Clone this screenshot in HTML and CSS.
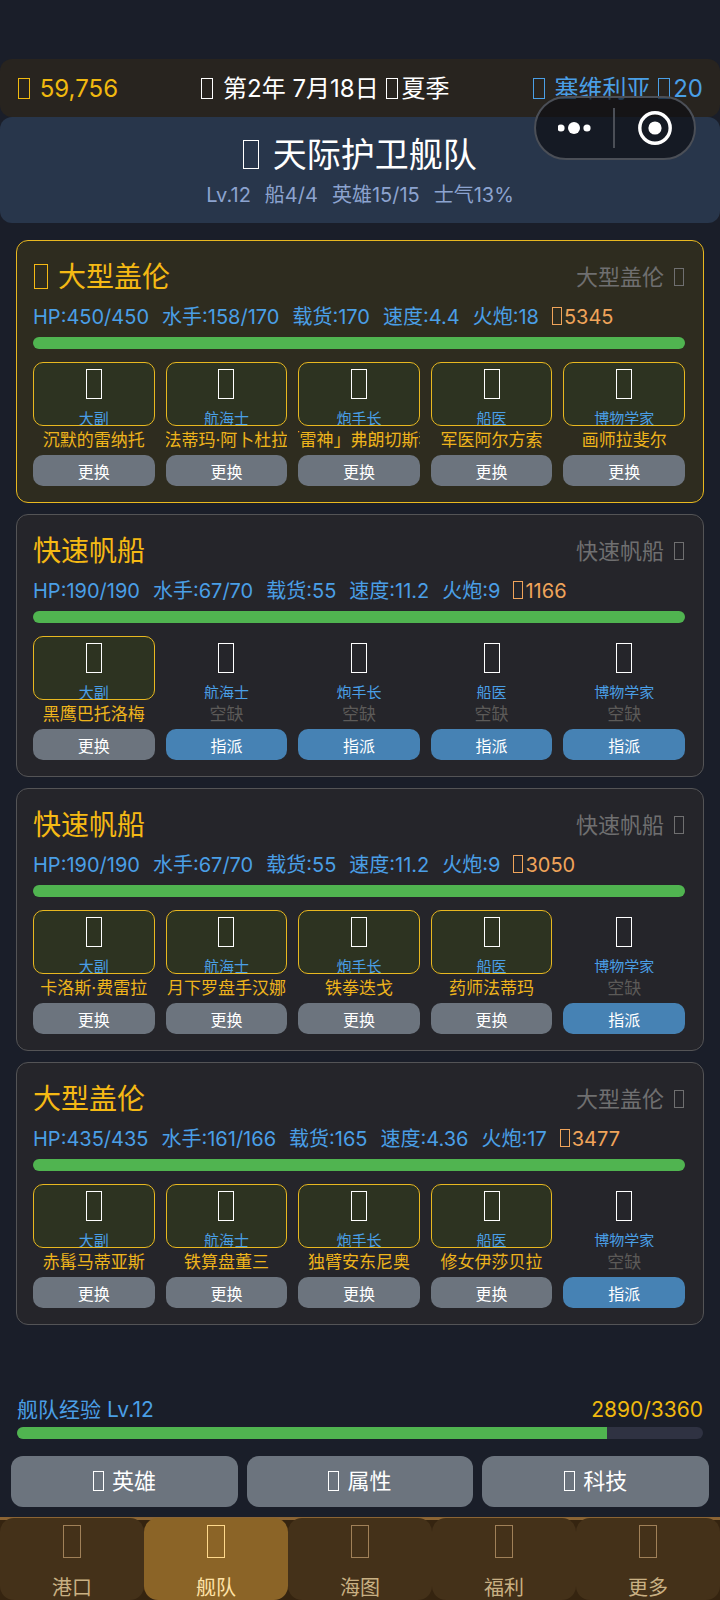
FILE: index.html
```html
<!DOCTYPE html>
<html lang="zh-CN">
<head>
<meta charset="utf-8">
<meta name="viewport" content="width=device-width, initial-scale=1">
<title>天际护卫舰队</title>
<link rel="stylesheet" href="styles.css">
</head>
<body>
<div class="app">
  <div class="topbar">
    <span class="gold"><i class="box box-m"></i> 59,756</span>
    <span class="date"><i class="box box-m"></i> 第2年 7月18日 <i class="box box-m"></i>夏季</span>
    <span class="port"><i class="box box-m"></i> 塞维利亚 <i class="box box-m"></i>20</span>
    <div class="capsule">
      <button class="capsule-btn" type="button" aria-label="更多操作">
        <svg width="36" height="14" viewBox="0 0 36 14" fill="#fff"><circle cx="3" cy="7" r="3.6"/><circle cx="16" cy="7" r="6"/><circle cx="29" cy="7" r="3.6"/></svg>
      </button>
      <button class="capsule-btn" type="button" aria-label="关闭">
        <svg width="34" height="34" viewBox="0 0 34 34"><circle cx="17" cy="17" r="15.2" fill="none" stroke="#fff" stroke-width="3.4"/><circle cx="17" cy="17" r="6.6" fill="#fff"/></svg>
      </button>
    </div>
  </div>
  <header class="fleet">
    <h1 class="fleet-name"><i class="box box-xl"></i> 天际护卫舰队</h1>
    <p class="fleet-info"><span>Lv.12</span><span>船4/4</span><span>英雄15/15</span><span>士气13%</span></p>
  </header>
  <main class="ships" id="ships"></main>
  <section class="exp">
    <div class="exp-row"><span class="exp-label">舰队经验 Lv.12</span><span class="exp-value">2890/3360</span></div>
    <div class="bar"><div class="bar-fill" style="width:86%"></div></div>
  </section>
  <div class="actions">
    <button class="action" type="button"><i class="box box-s"></i> 英雄</button>
    <button class="action" type="button"><i class="box box-s"></i> 属性</button>
    <button class="action" type="button"><i class="box box-s"></i> 科技</button>
  </div>
  <nav class="tabs">
    <button class="tab" type="button"><i class="box box-tab"></i><span>港口</span></button>
    <button class="tab tab-on" type="button" aria-current="page"><i class="box box-tab"></i><span>舰队</span></button>
    <button class="tab" type="button"><i class="box box-tab"></i><span>海图</span></button>
    <button class="tab" type="button"><i class="box box-tab"></i><span>福利</span></button>
    <button class="tab" type="button"><i class="box box-tab"></i><span>更多</span></button>
  </nav>
</div>
<script src="app.js"></script>
</body>
</html>
```
FILE: styles.css
```css
* { box-sizing: border-box; }
body {
  margin: 0;
  background: #1a1e29;
  color: #fff;
  font-family: Inter, "Noto Sans CJK SC", sans-serif;
  font-size: 20px;
}
button {
  margin: 0;
  padding: 0;
  border: 0;
  color: inherit;
  font: inherit;
}
.app {
  display: flex;
  flex-direction: column;
  min-height: 100vh;
  padding-top: 59px;
}

/* placeholder glyph */
.box {
  display: inline-block;
  flex: none;
  border: 1px solid currentColor;
}
.box-xs { width: 10px; height: 18px; margin: 0 1px 0 10px; }
.box-st { width: 10px; height: 18px; margin-right: 2px; vertical-align: -1px; }
.box-s { width: 11px; height: 20px; margin-right: 2px; vertical-align: -2px; }
.box-m { width: 12px; height: 21px; margin: 0 3px 0 1px; vertical-align: -2px; }
.box-l { width: 14px; height: 25px; margin: 0 2px 0 1px; vertical-align: -2px; }
.box-xl { width: 16px; height: 29px; margin-right: 4px; vertical-align: -2px; }
.box-slot { width: 16px; height: 30px; border-color: #fff; }
.box-tab { width: 18px; height: 33px; }

.topbar {
  position: relative;
  display: flex;
  justify-content: space-between;
  align-items: center;
  height: 58px;
  padding: 2px 17px 0;
  border-radius: 12px;
  background: #28241f;
  font-size: 24px;
  line-height: 32px;
  white-space: nowrap;
}
.gold { color: #f0b90f; }
.date { color: #fff; }
.port { color: #4a9fe6; }
.capsule {
  position: absolute;
  top: 37px;
  right: 24px;
  z-index: 2;
  display: flex;
  width: 162px;
  height: 64px;
  border: 2px solid #4b4f57;
  border-radius: 32px;
  background: rgba(14, 14, 17, 0.68);
}
.capsule-btn {
  display: flex;
  flex: 1;
  align-items: center;
  justify-content: center;
  background: linear-gradient(#4b4f57, #4b4f57) right center / 0 40px no-repeat;
}
.capsule-btn:first-child { background-size: 2px 40px; }

.fleet {
  padding: 14px 16px 12px;
  border-radius: 12px;
  background: #28364b;
  text-align: center;
}
.fleet-name {
  margin: 0;
  font-size: 34px;
  font-weight: 400;
  line-height: 48px;
}
.fleet-info {
  display: flex;
  justify-content: center;
  gap: 14px;
  margin: 0;
  color: #8ca3cf;
  line-height: 32px;
}

.ships {
  display: flex;
  flex-direction: column;
  gap: 11px;
  padding: 17px 16px 0;
}
.ship {
  padding: 16px 18px 16px 16px;
  border: 1px solid #545456;
  border-radius: 12px;
  background: #25252a;
}
.ship-flag {
  border-color: #e8b820;
  background: #2e2c1f;
}
.ship-head {
  display: flex;
  align-items: center;
  justify-content: space-between;
  line-height: 40px;
}
.ship-name {
  margin: 0;
  color: #f5b914;
  font-size: 28px;
  font-weight: 400;
}
.ship-type {
  display: flex;
  align-items: center;
  color: #6f6f70;
  font-size: 22px;
}
.stats {
  display: flex;
  gap: 13px;
  margin: 0;
  color: #4a9fe6;
  line-height: 40px;
  white-space: nowrap;
}
.power { color: #f0a45a; }
.bar {
  height: 12px;
  overflow: hidden;
  border-radius: 6px;
  background: #2f3242;
}
.bar-fill {
  height: 100%;
  background: #50b450;
}
.crew {
  display: grid;
  grid-template-columns: repeat(5, minmax(0, 1fr));
  gap: 11px;
  margin-top: 13px;
}
.post {
  display: flex;
  flex-direction: column;
  text-align: center;
}
.slot {
  display: flex;
  flex-direction: column;
  align-items: center;
  height: 64px;
  padding-top: 6px;
  overflow: hidden;
  border: 1px solid transparent;
  border-radius: 10px;
  color: #4a9fe6;
  font-size: 15px;
  line-height: 20px;
}
.slot span { margin-top: 10px; }
.slot-on {
  border-color: #e8b820;
  background: #2d3321;
}
.hero {
  display: flex;
  justify-content: center;
  overflow: hidden;
  color: #eeb41c;
  font-size: 17px;
  line-height: 29px;
  white-space: nowrap;
}
.hero-none { color: #5c5a58; }
.swap {
  height: 31px;
  border-radius: 10px;
  background: #6c747e;
  font-size: 16px;
}
.assign { background: #4682b4; }

.exp {
  margin-top: auto;
  padding: 0 17px;
}
.exp-row {
  display: flex;
  justify-content: space-between;
  font-size: 21px;
  line-height: 34px;
}
.exp-label { color: #4a9fe6; }
.exp-value { color: #f0b90f; }
.actions {
  display: grid;
  grid-template-columns: repeat(3, 1fr);
  gap: 9px;
  padding: 17px 11px 10px;
}
.action {
  height: 51px;
  padding-bottom: 5px;
  border-radius: 12px;
  background: #6c747e;
  font-size: 22px;
}
.tabs {
  display: grid;
  grid-template-columns: repeat(5, 1fr);
  padding-top: 1px;
  background: linear-gradient(#8b6434 3px, #352410 3px);
}
.tab {
  display: flex;
  flex-direction: column;
  align-items: center;
  height: 82px;
  padding-top: 7px;
  border-radius: 14px;
  background: #443119;
  color: #c9b083;
  line-height: 24px;
}
.tab span { margin-top: 18px; }
.tab .box { border-color: #a08058; }
.tab-on {
  background: #8b6427;
  color: #ffe2a6;
}
.tab-on .box { border-color: #ffd98c; }
```
FILE: app.js
```js
const POSTS = ['大副', '航海士', '炮手长', '船医', '博物学家'];
const SHIPS = [
  { name: '大型盖伦', flag: true, stats: ['HP:450/450', '水手:158/170', '载货:170', '速度:4.4', '火炮:18'], power: 5345,
    crew: ['沉默的雷纳托', '法蒂玛·阿卜杜拉', '「雷神」弗朗切斯科', '军医阿尔方索', '画师拉斐尔'] },
  { name: '快速帆船', stats: ['HP:190/190', '水手:67/70', '载货:55', '速度:11.2', '火炮:9'], power: 1166,
    crew: ['黑鹰巴托洛梅'] },
  { name: '快速帆船', stats: ['HP:190/190', '水手:67/70', '载货:55', '速度:11.2', '火炮:9'], power: 3050,
    crew: ['卡洛斯·费雷拉', '月下罗盘手汉娜', '铁拳迭戈', '药师法蒂玛'] },
  { name: '大型盖伦', stats: ['HP:435/435', '水手:161/166', '载货:165', '速度:4.36', '火炮:17'], power: 3477,
    crew: ['赤髯马蒂亚斯', '铁算盘董三', '独臂安东尼奥', '修女伊莎贝拉'] }
];

const post = (title, hero) => `
  <div class="post">
    <div class="slot ${hero ? 'slot-on' : ''}"><i class="box box-slot"></i><span>${title}</span></div>
    <div class="hero ${hero ? '' : 'hero-none'}">${hero || '空缺'}</div>
    <button class="swap ${hero ? '' : 'assign'}" type="button">${hero ? '更换' : '指派'}</button>
  </div>`;

document.getElementById('ships').innerHTML = SHIPS.map(s => `
  <article class="ship ${s.flag ? 'ship-flag' : ''}">
    <div class="ship-head">
      <h2 class="ship-name">${s.flag ? '<i class="box box-l"></i> ' : ''}${s.name}</h2>
      <span class="ship-type">${s.name} <i class="box box-xs"></i></span>
    </div>
    <p class="stats">${s.stats.map(t => `<span>${t}</span>`).join('')}<span class="power"><i class="box box-st"></i>${s.power}</span></p>
    <div class="bar"><div class="bar-fill" style="width:100%"></div></div>
    <div class="crew">${POSTS.map((p, i) => post(p, s.crew[i])).join('')}</div>
  </article>`).join('');
```
